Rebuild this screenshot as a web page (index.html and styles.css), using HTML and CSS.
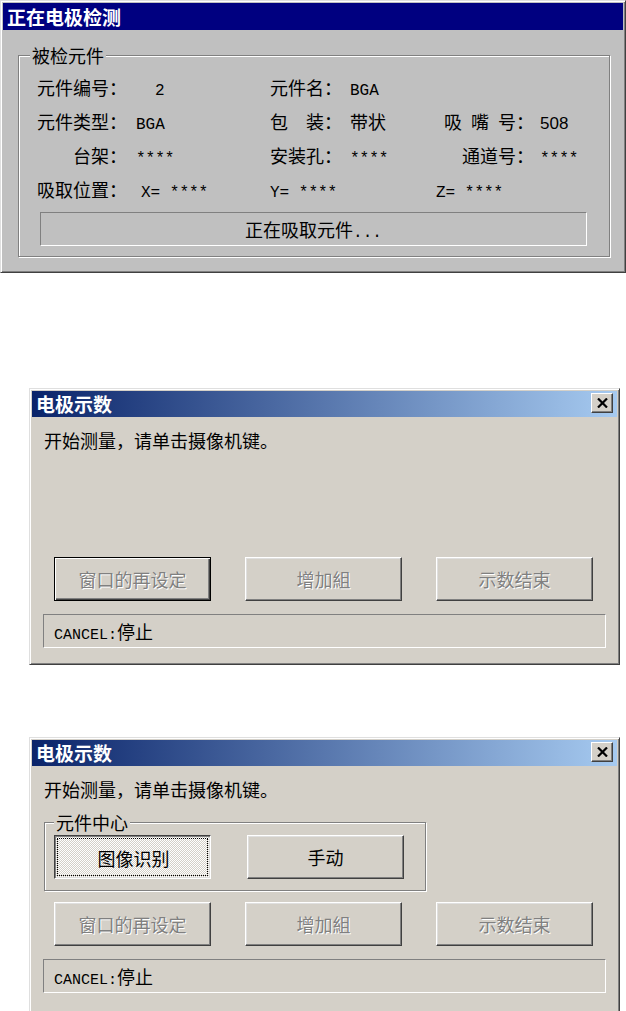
FILE: index.html
```html
<!DOCTYPE html>
<html lang="zh-CN">
<head>
    <meta charset="UTF-8">
    <meta name="viewport" content="width=device-width, initial-scale=1.0">
    <title>电极检测</title>
    <link rel="stylesheet" href="styles.css">
</head>
<body>

    <!-- 正在电极检测 -->
    <div class="window window-inspect">
        <div class="titlebar titlebar-solid">
            <span class="title-text">正在电极检测</span>
        </div>
        <fieldset class="group group-part">
            <legend>被检元件</legend>
            <div class="info-grid">
                <span class="lbl lbl-r">元件编号：</span>
                <span class="val val-indent mono">2</span>
                <span class="lbl">元件名：</span>
                <span class="mono">BGA</span>
                <span></span>
                <span></span>

                <span class="lbl lbl-r">元件类型：</span>
                <span class="val mono">BGA</span>
                <span class="lbl">包　装：</span>
                <span>带状</span>
                <span class="lbl lbl-r spaced">吸 嘴 号：</span>
                <span class="val-narrow sans">508</span>

                <span class="lbl lbl-r">台架：</span>
                <span class="val mono">****</span>
                <span class="lbl">安装孔：</span>
                <span class="mono">****</span>
                <span class="lbl lbl-r">通道号：</span>
                <span class="val-narrow mono">****</span>

                <span class="lbl lbl-r">吸取位置：</span>
                <span class="val val-pos mono">X= ****</span>
                <span class="span-2 mono">Y= ****</span>
                <span class="span-2 mono pull-left">Z= ****</span>
            </div>
            <div class="panel panel-progress"><span>正在吸取元件<span class="mono">...</span></span></div>
        </fieldset>
    </div>

    <!-- 电极示数 (1) -->
    <div class="window window-teach">
        <div class="titlebar titlebar-gradient">
            <span class="title-text">电极示数</span>
            <span class="close-btn">
                <svg width="11" height="10" viewBox="0 0 11 10"><path d="M1 0.5 L10 9.5 M10 0.5 L1 9.5" stroke="#000" stroke-width="2.2" fill="none"/></svg>
            </span>
        </div>
        <div class="dialog-body">
            <p class="message">开始测量，请单击摄像机键。</p>
            <div class="button-row button-row-low">
                <button class="btn btn-default" disabled>窗口的再设定</button>
                <button class="btn" disabled>增加組</button>
                <button class="btn" disabled>示数结束</button>
            </div>
            <div class="panel panel-status"><span><span class="mono-small">CANCEL:</span>停止</span></div>
        </div>
    </div>

    <!-- 电极示数 (2) -->
    <div class="window window-teach window-teach-center">
        <div class="titlebar titlebar-gradient">
            <span class="title-text">电极示数</span>
            <span class="close-btn">
                <svg width="11" height="10" viewBox="0 0 11 10"><path d="M1 0.5 L10 9.5 M10 0.5 L1 9.5" stroke="#000" stroke-width="2.2" fill="none"/></svg>
            </span>
        </div>
        <div class="dialog-body">
            <p class="message">开始测量，请单击摄像机键。</p>
            <fieldset class="group group-center">
                <legend>元件中心</legend>
                <div class="button-row">
                    <button class="btn btn-pressed"><span class="btn-focus">图像识别</span></button>
                    <button class="btn">手动</button>
                </div>
            </fieldset>
            <div class="button-row button-row-after-group">
                <button class="btn" disabled>窗口的再设定</button>
                <button class="btn" disabled>增加組</button>
                <button class="btn" disabled>示数结束</button>
            </div>
            <div class="panel panel-status"><span><span class="mono-small">CANCEL:</span>停止</span></div>
        </div>
    </div>

</body>
</html>
```

FILE: styles.css
```css
body {
    margin: 0;
    background-color: #ffffff;
    font-family: "Noto Sans CJK SC", "Liberation Sans", sans-serif;
    font-size: 18px;
    color: #000000;
}

/* classic window frame */
.window {
    box-sizing: border-box;
    border: 1px solid;
    border-color: #dfdfdf #404040 #404040 #dfdfdf;
    box-shadow: inset 1px 1px #ffffff, inset -1px -1px #808080;
    padding: 2px;
    background-color: #d4d0c8;
    overflow: hidden;
}

.window-inspect {
    width: 626px;
    height: 273px;
    background-color: #c0c0c0;
}

.window-teach {
    width: 591px;
    height: 277px;
    margin-left: 29px;
    margin-top: 115px;
}

.window-teach-center {
    margin-top: 72px;
}

.titlebar {
    height: 26px;
    display: flex;
    align-items: center;
    justify-content: space-between;
    padding: 0 4px;
    color: #ffffff;
}

.titlebar-solid {
    height: 27px;
    background-color: #000080;
}

.titlebar-gradient {
    background: linear-gradient(to right, #0a246a, #a6caf0);
}

.title-text {
    font-size: 19px;
    font-weight: 700;
    line-height: 26px;
}

.close-btn {
    box-sizing: border-box;
    width: 22px;
    height: 20px;
    margin-top: -2px;
    display: flex;
    align-items: center;
    justify-content: center;
    background-color: #d4d0c8;
    border: 1px solid;
    border-color: #ffffff #404040 #404040 #ffffff;
    box-shadow: inset -1px -1px #808080;
}

/* group boxes */
.group {
    margin: 0;
    border: 1px solid #808080;
    box-shadow: inset 1px 1px #ffffff, 1px 1px #ffffff;
}

.group legend {
    padding: 0 2px;
    line-height: 20px;
}

.group-part {
    margin: 15px 13px 0 15px;
    padding: 5px 4px 10px 18px;
    background-color: #c0c0c0;
}

.group-part legend {
    margin-left: -7px;
    background-color: #c0c0c0;
}

.info-grid {
    display: grid;
    grid-template-columns: 90px 143px 80px 92px 92px 1fr;
    grid-auto-rows: 34px;
    align-items: baseline;
    line-height: 34px;
    white-space: pre;
}

.lbl-r {
    text-align: right;
}

.val {
    padding-left: 9px;
}

.val-indent {
    padding-left: 28px;
}

.val-pos {
    padding-left: 14px;
}

.val-narrow {
    padding-left: 6px;
}

.span-2 {
    grid-column: span 2;
}

.pull-left {
    margin-left: -6px;
}

.spaced {
    word-spacing: 5px;
}

.mono {
    font-family: "Liberation Mono", monospace;
    font-size: 16px;
}

.mono-small {
    font-family: "Liberation Mono", monospace;
    font-size: 15px;
}

.sans {
    font-family: "Liberation Sans", sans-serif;
    font-size: 17px;
}

/* sunken panels */
.panel {
    box-sizing: border-box;
    height: 34px;
    display: flex;
    align-items: center;
    border: 1px solid;
    border-color: #808080 #ffffff #ffffff #808080;
}

.panel-progress {
    margin: 6px 18px 0 3px;
    justify-content: center;
}

.panel-status {
    margin-top: 13px;
    padding-left: 10px;
}

/* dialog body */
.dialog-body {
    padding: 11px 11px 0 11px;
}

.message {
    margin: 0;
    padding-left: 1px;
    line-height: 24px;
}

.button-row {
    display: flex;
    gap: 34px;
    padding-left: 11px;
}

.button-row-low {
    margin-top: 105px;
}

.button-row-after-group {
    margin-top: 11px;
}

.group-center {
    width: 382px;
    box-sizing: border-box;
    margin: 11px 0 0 1px;
    padding: 3px 0 11px 9px;
    background-color: #d4d0c8;
}

.group-center legend {
    background-color: #d4d0c8;
}

.group-center .button-row {
    padding-left: 0;
    gap: 36px;
}

/* buttons */
.btn {
    box-sizing: border-box;
    width: 157px;
    height: 44px;
    padding: 0;
    display: flex;
    align-items: center;
    justify-content: center;
    font-family: inherit;
    font-size: 18px;
    color: #000000;
    background-color: #d4d0c8;
    border: 1px solid;
    border-color: #ffffff #404040 #404040 #ffffff;
    box-shadow: inset -1px -1px #808080, inset 1px 1px #dfdfdf;
}

.btn:disabled {
    color: #808080;
    text-shadow: 1px 1px 0 #ffffff;
}

.btn-default {
    border-color: #000000;
    box-shadow: inset 1px 1px #ffffff, inset -1px -1px #404040, inset -2px -2px #808080;
}

.btn-pressed {
    border-color: #404040 #ffffff #ffffff #404040;
    box-shadow: inset 1px 1px #808080, inset -1px -1px #dfdfdf;
    background-image: repeating-conic-gradient(#ffffff 0 25%, #d4d0c8 0 50%);
    background-size: 2px 2px;
}

.btn-focus {
    align-self: stretch;
    flex: 1;
    margin: 2px;
    display: flex;
    align-items: center;
    justify-content: center;
    padding-top: 2px;
    padding-left: 2px;
    border: 1px dotted #000000;
}
```
